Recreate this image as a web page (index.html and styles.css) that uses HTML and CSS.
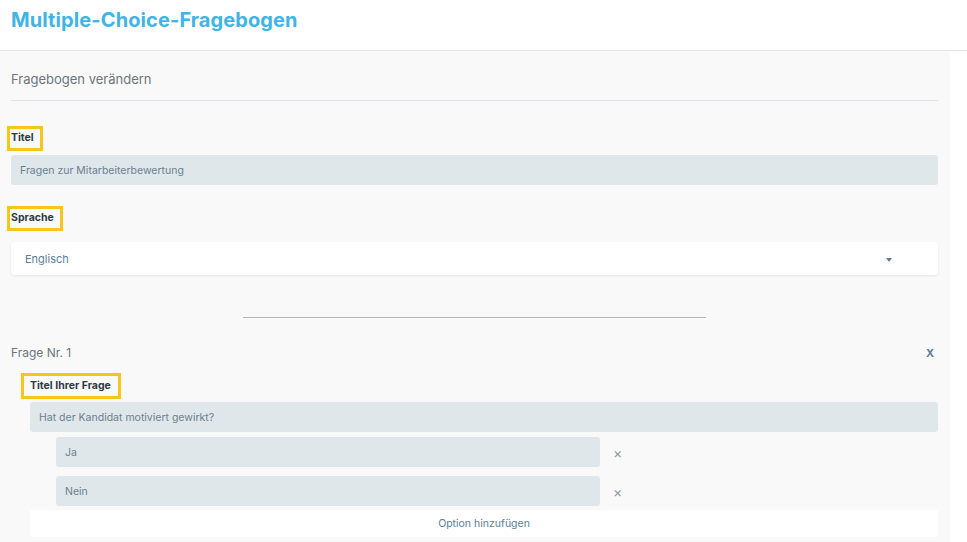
FILE: index.html
```html
<!DOCTYPE html>
<html lang="de">
<head>
    <meta charset="UTF-8">
    <meta name="viewport" content="width=device-width, initial-scale=1.0">
    <title>Multiple-Choice-Fragebogen</title>
    <link rel="stylesheet" href="styles.css">
</head>
<body>
    <header class="topbar">
        <h1>Multiple-Choice-Fragebogen</h1>
    </header>

    <main class="panel">
        <div class="panel-title">Fragebogen verändern</div>

        <!-- Allgemeine Angaben -->
        <div class="field">
            <span class="label">Titel</span>
            <div class="input">Fragen zur Mitarbeiterbewertung</div>
        </div>

        <div class="field">
            <span class="label">Sprache</span>
            <div class="select">
                <span>Englisch</span>
                <span class="caret"></span>
            </div>
        </div>

        <div class="divider"></div>

        <!-- Frage 1 -->
        <div class="question-head">
            <span>Frage Nr. 1</span>
            <span class="remove">X</span>
        </div>
        <div class="question">
            <span class="label">Titel Ihrer Frage</span>
            <div class="input">Hat der Kandidat motiviert gewirkt?</div>
            <div class="options">
                <div class="option">
                    <div class="input">Ja</div>
                    <span class="close">&times;</span>
                </div>
                <div class="option">
                    <div class="input">Nein</div>
                    <span class="close">&times;</span>
                </div>
            </div>
            <button class="add-btn">Option hinzufügen</button>
        </div>
    </main>
</body>
</html>
```

FILE: styles.css
```css
body {
    margin: 0;
    font-family: 'Inter', 'Open Sans', sans-serif;
    background: #ffffff;
    color: #333;
}
.topbar {
    height: 50px;
    display: flex;
    align-items: center;
    padding: 0 11px;
    border-bottom: 1px solid #e6e6e6;
    box-shadow: 0 1px 2px rgba(0, 0, 0, 0.04);
}
.topbar h1 {
    margin: 0 0 10px;
    font-size: 20px;
    font-weight: 700;
    color: #3fb4e5;
    letter-spacing: 0.1px;
}
.panel {
    width: 927px;
    background: #f9f9f9;
    padding: 20px 12px 10px 11px;
    min-height: 470px;
    box-sizing: content-box;
}
.panel-title {
    font-size: 13px;
    color: #6b757c;
    padding-bottom: 13px;
    border-bottom: 1px solid #dde4ea;
    margin-bottom: 25px;
}
.field {
    display: flex;
    flex-direction: column;
    align-items: flex-start;
    margin-bottom: 21px;
}
.label {
    display: inline-block;
    font-size: 10.5px;
    font-weight: 700;
    color: #2c3a45;
    padding: 4px 6px 5px 1px;
    margin-left: -4px;
    border: 3px solid #f9c51a;
    line-height: 10px;
    margin-bottom: 4px;
}
.input {
    width: 100%;
    box-sizing: border-box;
    height: 30px;
    background: #e0e7eb;
    border-radius: 3px;
    font-size: 10.5px;
    color: #6a8190;
    display: flex;
    align-items: center;
    padding: 0 9px;
}
.field + .field {
    margin-bottom: 0;
}
.field + .field .label {
    margin-bottom: 11px;
}
.select {
    width: 100%;
    box-sizing: border-box;
    height: 33px;
    background: #fff;
    border-radius: 4px;
    box-shadow: 0 1px 3px rgba(0, 0, 0, 0.08);
    display: flex;
    align-items: center;
    justify-content: space-between;
    padding: 0 46px 0 14px;
    font-size: 11px;
    color: #5b7e97;
}
.caret {
    width: 0;
    height: 0;
    border-left: 3px solid transparent;
    border-right: 3px solid transparent;
    border-top: 4px solid #5b7e97;
    margin-top: 3px;
}
.divider {
    width: 463px;
    height: 1px;
    background: #b5b5b5;
    margin: 42px auto 27px 232px;
}
.question-head {
    display: flex;
    justify-content: space-between;
    align-items: center;
    font-size: 12px;
    color: #6b757c;
    padding-right: 4px;
}
.remove {
    font-size: 11px;
    font-weight: 700;
    color: #5b7e97;
}
.question {
    display: flex;
    flex-direction: column;
    align-items: flex-start;
    padding-left: 19px;
    margin-top: 13px;
}
.question .label {
    margin-left: -9px;
    padding: 5px 7px 5px 6px;
    margin-bottom: 3px;
}
.options {
    width: 100%;
    display: flex;
    flex-direction: column;
    gap: 9px;
    padding-left: 26px;
    box-sizing: border-box;
    margin-top: 5px;
}
.option {
    display: flex;
    align-items: center;
    gap: 13px;
}
.option .input {
    width: 544px;
    flex: none;
}
.close {
    font-size: 14px;
    color: #8a9aa5;
}
.add-btn {
    width: 100%;
    height: 27px;
    margin-top: 4px;
    border: none;
    border-radius: 3px;
    background: #fff;
    font-family: inherit;
    font-size: 10.5px;
    color: #5b7e97;
    cursor: pointer;
}
```
